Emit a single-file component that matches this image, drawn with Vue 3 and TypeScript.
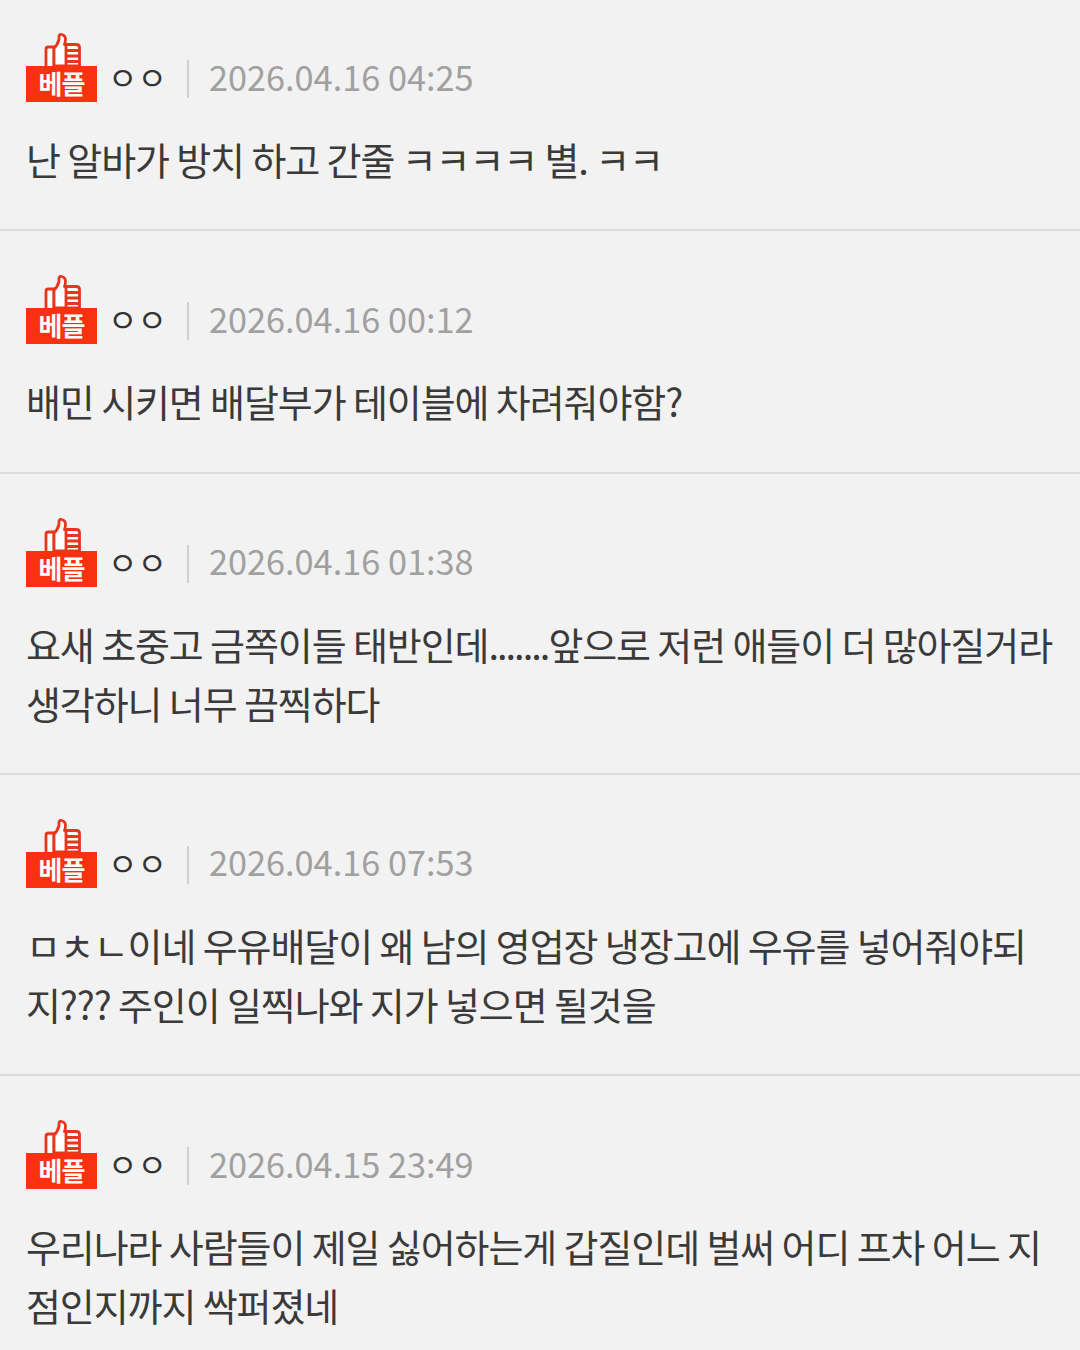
<template>
  <div class="list">
    <div v-for="(c, i) in comments" :key="i" class="item">
      <div class="meta">
        <div class="badge">
          <svg class="thumb" width="38" height="34" viewBox="0 0 38 34" fill="none">
            <path d="M2 33V16C2 14.500 3 14 4.500 14H10V33" fill="#fff" stroke="#e8351c" stroke-width="2.800" />
            <path d="M10 33V15C12.500 13 14 10 15 6.500V3.500C15 2 16 1 17.500 1.500C20 2 21.500 4 21.500 6.500C21.500 8.500 21 10 20.500 11.500H32C34 11.500 35.500 12.500 35.500 14.500V33Z" fill="#fff" stroke="#e8351c" stroke-width="2.800" stroke-linejoin="round" />
            <path d="M22 17.500H36M22 23H36M22 28.500H36" stroke="#e8351c" stroke-width="2.800" />
            <path d="M22 11.500V33" stroke="#e8351c" stroke-width="2.800" />
          </svg>
          <span class="badge-label">베플</span>
        </div>
        <span class="nick">ㅇㅇ</span>
        <span class="sep"></span>
        <span class="date">{{ c.date }}</span>
      </div>
      <p class="body">
        <template v-for="(part, j) in splitDots(c.text)" :key="j"><span v-if="part.startsWith('..')" class="dots">{{ part }}</span><template v-else>{{ part }}</template></template>
      </p>
    </div>
  </div>
</template>

<script setup lang="ts">
interface Comment {
  date: string
  text: string
}

const comments: Comment[] = [
  { date: '2026.04.16 04:25', text: '난 알바가 방치 하고 간줄 ㅋㅋㅋㅋ 별. ㅋㅋ' },
  { date: '2026.04.16 00:12', text: '배민 시키면 배달부가 테이블에 차려줘야함?' },
  { date: '2026.04.16 01:38', text: '요새 초중고 금쪽이들 태반인데.......앞으로 저런 애들이 더 많아질거라\n생각하니 너무 끔찍하다' },
  { date: '2026.04.16 07:53', text: 'ㅁㅊㄴ이네 우유배달이 왜 남의 영업장 냉장고에 우유를 넣어줘야되\n지??? 주인이 일찍나와 지가 넣으면 될것을' },
  { date: '2026.04.15 23:49', text: '우리나라 사람들이 제일 싫어하는게 갑질인데 벌써 어디 프차 어느 지\n점인지까지 싹퍼졌네' },
]

// runs of dots are set tighter than the rest of the text
function splitDots(text: string): string[] {
  return text.split(/(\.{2,})/)
}
</script>

<style>
html, body {
  margin: 0;
  background: #f2f2f2;
}
</style>

<style scoped>
.list {
  width: 1080px;
  height: 1350px;
  overflow: hidden;
  background: #f2f2f2;
  font-family: "Noto Sans CJK KR", "Noto Sans", sans-serif;
}

.item {
  padding: 44px 0 41.3px 26px;
  border-bottom: 2px solid #dcdcdc;
}

.item:first-child {
  padding-top: 33px;
}

.meta {
  display: flex;
  align-items: center;
  height: 70px;
}

.badge {
  position: relative;
  width: 71px;
  height: 70px;
  flex: none;
}

.thumb {
  position: absolute;
  left: 18px;
  top: 0;
}

.badge-label {
  position: absolute;
  left: 0;
  bottom: 1px;
  width: 71px;
  height: 36px;
  background: #f9310e;
  color: #fff;
  font-size: 26px;
  font-weight: 700;
  line-height: 33px;
  text-align: center;
  letter-spacing: -1px;
}

.nick {
  margin-left: 11px;
  margin-top: 16px;
  font-size: 32px;
  color: #333;
  line-height: 50px;
}

.sep {
  width: 2px;
  height: 38px;
  margin: 22px 19px 0 20px;
  background: #d0d0d0;
}

.date {
  margin-top: 15px;
  margin-left: 1px;
  font-size: 34.3px;
  font-feature-settings: "case";
  color: #a0a0a0;
  line-height: 50px;
}

.body {
  margin: 26px 0 0;
  font-size: 38px;
  line-height: 59px;
  letter-spacing: -1.1px;
  color: #3a3a3a;
  white-space: pre-line;
}

.dots {
  letter-spacing: -2px;
}
</style>
